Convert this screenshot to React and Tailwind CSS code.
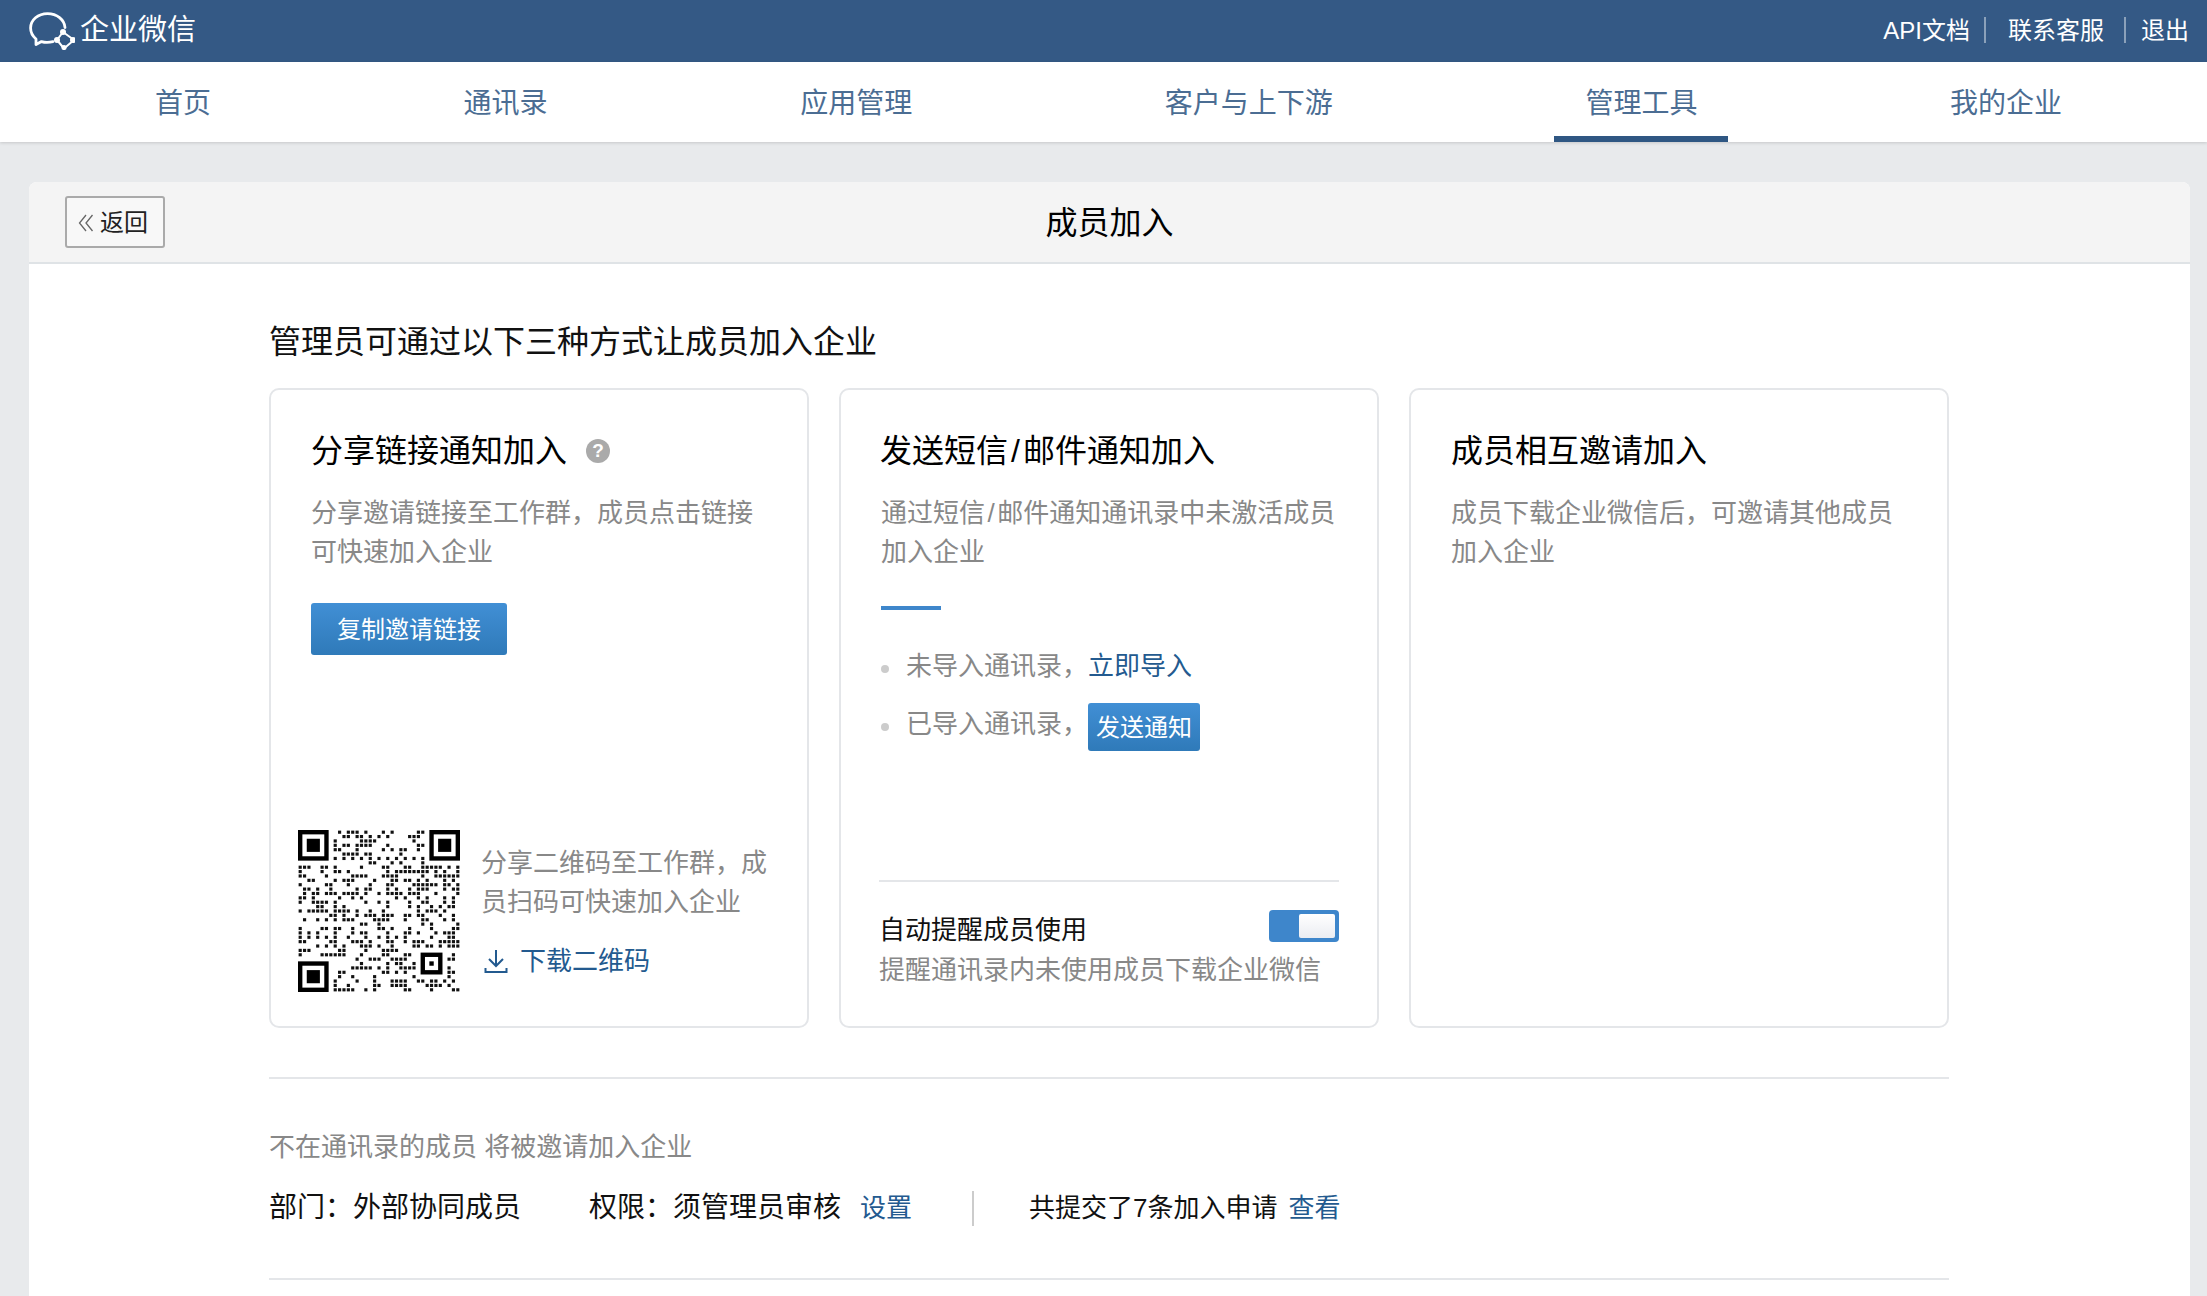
import React from "react";

const SIZE = 37;

function inFinder(r, c) {
  return (r < 8 && c < 8) || (r < 8 && c >= SIZE - 8) || (r >= SIZE - 8 && c < 8);
}

function inAlign(r, c) {
  return r >= 27 && r <= 33 && c >= 27 && c <= 33;
}

// not a real code, just the same look and density as the picture
function qrDots() {
  let seed = 20517;
  const dots = [];
  for (let r = 0; r < SIZE; r++) {
    for (let c = 0; c < SIZE; c++) {
      seed = (seed * 1103515 + 12345) & 0x7fffffff;
      if (inFinder(r, c) || inAlign(r, c)) continue;
      const on = r === 6 || c === 6 ? (r + c) % 2 === 0 : (seed >> 12) % 100 < 40;
      if (on) dots.push([r, c]);
    }
  }
  return dots;
}

function Finder({ x, y }) {
  return (
    <g>
      <rect x={x} y={y} width="7" height="7" fill="#000" />
      <rect x={x + 1} y={y + 1} width="5" height="5" fill="#fff" />
      <rect x={x + 2} y={y + 2} width="3" height="3" fill="#000" />
    </g>
  );
}

function QrCode() {
  return (
    <svg viewBox="0 0 37 37" className="w-[162px] h-[162px] shrink-0" shapeRendering="geometricPrecision">
      <Finder x={0} y={0} />
      <Finder x={30} y={0} />
      <Finder x={0} y={30} />
      <rect x="28" y="28" width="5" height="5" fill="#000" />
      <rect x="29" y="29" width="3" height="3" fill="#fff" />
      <rect x="30" y="30" width="1" height="1" fill="#000" />
      {qrDots().map(([r, c]) => (
        <rect key={r + "-" + c} x={c + 0.14} y={r + 0.14} width="0.72" height="0.72" fill="#111" />
      ))}
    </svg>
  );
}

function Logo() {
  return (
    <svg width="46" height="38" viewBox="0 0 46 38" fill="none" stroke="#fff" className="shrink-0">
      <path
        d="M24 29.6C20 30.6 15.5 30.5 12.5 29.6L7 32.6L7 27C3.5 24 1.6 20.2 1.6 16C1.6 8 9 1.6 18.5 1.6C28 1.6 35.4 7.6 36 15.5"
        strokeWidth="2.8"
        strokeLinecap="round"
        strokeLinejoin="round"
      />
      <path d="M34 20L45 28L35 36.5L28 28Z" strokeWidth="2" strokeLinejoin="round" />
      <circle cx="34" cy="20" r="3" fill="#fff" stroke="none" />
      <circle cx="44" cy="28" r="3" fill="#fff" stroke="none" />
      <circle cx="35" cy="35.5" r="2.6" fill="#fff" stroke="none" />
      <circle cx="28" cy="28" r="3" fill="#fff" stroke="none" />
    </svg>
  );
}

function DownloadIcon() {
  return (
    <svg width="24" height="24" viewBox="0 0 24 24" fill="none" stroke="#235a8f" strokeWidth="2" className="shrink-0">
      <path d="M12 1V16" />
      <path d="M5 10L12 17L19 10" />
      <path d="M1.5 19V23H22.5V19" />
    </svg>
  );
}

function BackIcon() {
  return (
    <svg width="16" height="20" viewBox="0 0 16 20" fill="none" stroke="#666" strokeWidth="1.3" className="shrink-0">
      <path d="M8 2L1.5 10L8 18" />
      <path d="M14.5 2L8 10L14.5 18" />
    </svg>
  );
}

const navs = ["首页", "通讯录", "应用管理", "客户与上下游", "管理工具", "我的企业"];

export default function App() {
  return (
    <div className="h-screen overflow-hidden bg-[#e8eaec] font-['Liberation_Sans','Noto_Sans_CJK_SC',sans-serif]">
      <div className="h-[62px] bg-[#345985] flex items-center justify-between pl-[29px] pr-[18px] text-white">
        <div className="flex items-center">
          <Logo />
          <span className="ml-[5px] text-[29px] leading-[40px] -mt-[2px]">企业微信</span>
        </div>
        <div className="flex items-center text-[24px] leading-[32px]">
          <span>API文档</span>
          <span className="w-[2px] h-[26px] bg-[#8ba1ba] ml-[14px] mr-[22px] -mt-[2px]"></span>
          <span>联系客服</span>
          <span className="w-[2px] h-[26px] bg-[#8ba1ba] ml-[20px] mr-[15px] -mt-[2px]"></span>
          <span>退出</span>
        </div>
      </div>

      <div className="h-[80px] bg-white shadow-[0_1px_3px_rgba(0,0,0,0.15)] flex pl-[124px] gap-[190.6px] relative">
        {navs.map((n) => (
          <div
            key={n}
            className={
              n === "管理工具"
                ? "px-[31px] h-full text-[28px] leading-[40px] pt-[22px] text-[#4b6d93] border-b-[6px] border-[#2f5783]"
                : "px-[31px] h-full text-[28px] leading-[40px] pt-[22px] text-[#4b6d93]"
            }
          >
            {n}
          </div>
        ))}
      </div>

      <div className="pt-[40px] pl-[29px] pr-[17px]">
        <div className="bg-white rounded-t-[8px] overflow-hidden">
          <div className="h-[82px] bg-[#f4f4f4] border-b-2 border-[#dfe3e6] relative flex items-center justify-center">
            <div className="absolute left-[36px] top-[14px] w-[100px] h-[52px] border-2 border-[#aaaaaa] rounded-[3px] bg-[#f8f8f8] flex items-center pl-[11px] text-[24px] text-[#222] pt-[1px]">
              <BackIcon />
              <span className="ml-[6px]">返回</span>
            </div>
            <h1 className="text-[32px] leading-[44px] text-black mt-[2px]">成员加入</h1>
          </div>

          <div className="pl-[240px] pr-[241px] pb-[60px]">
            <h2 className="pt-[56px] text-[32px] leading-[44px] text-[#111]">管理员可通过以下三种方式让成员加入企业</h2>

            <div className="mt-[24px] flex gap-[30px]">
              <div className="w-[540px] h-[640px] border-2 border-[#e4e6e9] rounded-[10px] pt-[41px] px-[40px] pb-[34px] flex flex-col">
                <div className="flex items-center text-[32px] leading-[40px] text-black">
                  分享链接通知加入
                  <span className="ml-[19px] w-[24px] h-[24px] rounded-full bg-[#aaaaaa] text-white text-[19px] leading-[24px] font-bold text-center">?</span>
                </div>
                <p className="mt-[23px] text-[26px] leading-[39px] text-[#888] whitespace-nowrap">
                  分享邀请链接至工作群，成员点击链接
                  <br />
                  可快速加入企业
                </p>
                <div className="mt-[31px] w-[196px] h-[52px] rounded-[3px] bg-gradient-to-b from-[#418fd5] to-[#2f7ab9] text-white text-[24px] flex items-center justify-center pt-[2px]">
                  复制邀请链接
                </div>
                <div className="mt-auto -ml-[13px] flex gap-[21px]">
                  <QrCode />
                  <div className="pt-[14px]">
                    <p className="text-[26px] leading-[39px] text-[#888] whitespace-nowrap">
                      分享二维码至工作群，成
                      <br />
                      员扫码可快速加入企业
                    </p>
                    <div className="mt-[19px] flex items-center pl-[3px] gap-[12px] text-[26px] leading-[40px] text-[#235a8f]">
                      <DownloadIcon />
                      下载二维码
                    </div>
                  </div>
                </div>
              </div>

              <div className="w-[540px] h-[640px] border-2 border-[#e4e6e9] rounded-[10px] pt-[41px] px-[40px] pb-[36px] flex flex-col">
                <div className="text-[32px] leading-[40px] text-black -ml-[1px]">
                  发送短信<span className="mx-[3px]">/</span>邮件通知加入
                </div>
                <p className="mt-[23px] text-[26px] leading-[39px] text-[#888] whitespace-nowrap">
                  通过短信<span className="mx-[2.5px]">/</span>邮件通知通讯录中未激活成员
                  <br />
                  加入企业
                </p>
                <div className="mt-[34px] w-[60px] h-[4px] bg-[#3e86cb]"></div>
                <div className="mt-[36px] flex items-start text-[26px] leading-[40px]">
                  <span className="w-[8px] h-[8px] rounded-full bg-[#cccccc] mt-[19px] mr-[17px]"></span>
                  <span className="text-[#888]">未导入通讯录，</span>
                  <span className="text-[#235a8f]">立即导入</span>
                </div>
                <div className="mt-[17px] flex items-start text-[26px] leading-[42px]">
                  <span className="w-[8px] h-[8px] rounded-full bg-[#cccccc] mt-[20px] mr-[17px]"></span>
                  <span className="text-[#888]">已导入通讯录，</span>
                  <span className="w-[112px] h-[48px] rounded-[3px] bg-gradient-to-b from-[#418fd5] to-[#2f7ab9] text-white text-[24px] flex items-center justify-center pt-[2px]">
                    发送通知
                  </span>
                </div>
                <div className="mt-auto -mx-[2px] border-t-2 border-[#e4e6e9] pt-[28px]">
                  <div className="flex justify-between items-start">
                    <span className="text-[26px] leading-[40px] text-[#111]">自动提醒成员使用</span>
                    <div className="w-[70px] h-[32px] rounded-[4px] bg-[#3e86cb] flex items-center justify-end pr-[4px]">
                      <div className="w-[36px] h-[24px] rounded-[2px] bg-gradient-to-b from-white to-[#ebedf2]"></div>
                    </div>
                  </div>
                  <p className="text-[26px] leading-[40px] text-[#888] whitespace-nowrap">提醒通讯录内未使用成员下载企业微信</p>
                </div>
              </div>

              <div className="w-[540px] h-[640px] border-2 border-[#e4e6e9] rounded-[10px] pt-[41px] px-[40px]">
                <div className="text-[32px] leading-[40px] text-black">成员相互邀请加入</div>
                <p className="mt-[23px] text-[26px] leading-[39px] text-[#888] whitespace-nowrap">
                  成员下载企业微信后，可邀请其他成员
                  <br />
                  加入企业
                </p>
              </div>
            </div>

            <div className="mt-[49px] h-[2px] bg-[#e4e6e9]"></div>
            <p className="mt-[48px] text-[26px] leading-[40px] text-[#888]">不在通讯录的成员 将被邀请加入企业</p>
            <div className="mt-[21px] h-[40px] flex items-center text-[#111]">
              <span className="text-[28px] leading-[40px] w-[84px]">部门：</span>
              <span className="text-[28px] leading-[40px]">外部协同成员</span>
              <span className="ml-[68px] text-[28px] leading-[40px] w-[84px]">权限：</span>
              <span className="text-[28px] leading-[40px]">须管理员审核</span>
              <span className="ml-[19px] text-[26px] text-[#235a8f]">设置</span>
              <span className="ml-[60px] w-[2px] h-[35px] bg-[#cccccc]"></span>
              <span className="ml-[55px] text-[26px]">共提交了7条加入申请</span>
              <span className="ml-[11px] text-[26px] text-[#235a8f]">查看</span>
            </div>
            <div className="mt-[50px] h-[2px] bg-[#e4e6e9]"></div>
          </div>
        </div>
      </div>
    </div>
  );
}
